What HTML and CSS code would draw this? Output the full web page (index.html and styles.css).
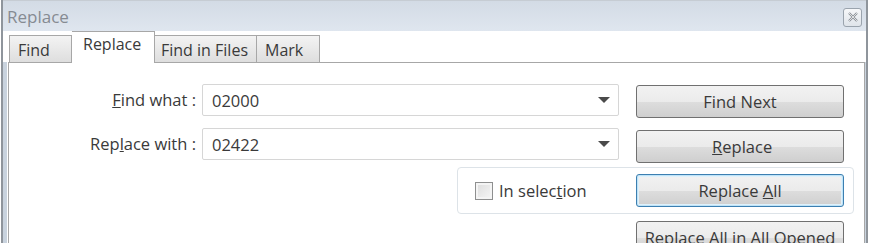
FILE: index.html
```html
<!DOCTYPE html>
<html>
<head>
<meta charset="utf-8">
<link rel="stylesheet" href="styles.css">
</head>
<body>
<div class="window">
  <div class="titlebar">
    <span class="title">Replace</span>
    <span class="close"><svg width="12" height="12" viewBox="0 0 12 12"><path d="M2 2 L10 10 M10 2 L2 10" stroke="#8a8f96" stroke-width="2.2" fill="none"/><path d="M2 2 L10 10 M10 2 L2 10" stroke="#f4f4f4" stroke-width="0.8" fill="none"/></svg></span>
  </div>
  <div class="tabs">
    <div class="tab t-find">Find</div>
    <div class="tab active t-replace">Replace</div>
    <div class="tab t-files">Find in Files</div>
    <div class="tab t-mark">Mark</div>
  </div>
  <div class="panel">
    <div class="row">
      <label class="lbl"><u>F</u>ind what :</label>
      <div class="combo"><span>02000</span><span class="arrow"></span></div>
      <button class="btn">Find Next</button>
    </div>
    <div class="row">
      <label class="lbl">Rep<u>l</u>ace with :</label>
      <div class="combo"><span>02422</span><span class="arrow"></span></div>
      <button class="btn btn-low">&nbsp;<u>R</u>eplace</button>
    </div>
    <div class="group">
      <label class="check"><span class="box"></span>In selec<u>t</u>ion</label>
      <button class="btn focus">Replace <u>A</u>ll</button>
    </div>
    <div class="lastrow">
      <button class="btn">Replace All in All Opened</button>
    </div>
  </div>
</div>
</body>
</html>
```
FILE: styles.css
```css
html, body {
  margin: 0;
  padding: 0;
  background: #ffffff;
  overflow: hidden;
}
body {
  width: 875px;
  height: 243px;
  font-family: "Open Sans", "Noto Sans", sans-serif;
  font-size: 16.5px;
  color: #3a3a3a;
}
.window {
  width: 867px;
  height: 260px;
  border-left: 2px solid #8f959c;
  border-right: 2px solid #8f959c;
  margin-left: 1px;
  box-shadow: inset 4px 0 0 #c9d3de, inset -4px 0 0 #c9d3de;
  box-sizing: border-box;
  display: flex;
  flex-direction: column;
}
.titlebar {
  height: 31px;
  background: linear-gradient(#d3dbe5, #dfe6ef);
  display: flex;
  align-items: center;
  justify-content: space-between;
  padding: 0 4px 0 4px;
  box-sizing: border-box;
  border-top: 1px solid #c6ccd3;
}
.title {
  font-size: 17px;
  color: #868b92;
  padding-top: 1px;
}
.close {
  width: 19px;
  height: 19px;
  box-sizing: border-box;
  border: 1px solid #9aa3ad;
  border-radius: 3px;
  background: linear-gradient(#f6f7f9, #dfe4ea);
  display: flex;
  align-items: center;
  justify-content: center;
  margin-top: 2px;
}
.tabs {
  display: flex;
  align-items: flex-end;
  height: 31px;
  padding-left: 6px;
  background: #ffffff;
  position: relative;
  z-index: 1;
}
.tab {
  height: 27px;
  box-sizing: border-box;
  border: 1px solid #a7a7a7;
  border-bottom: none;
  border-left: none;
  background: linear-gradient(#f3f3f3, #dedede);
  padding: 3px 0 0 8px;
  line-height: 22px;
  font-size: 16px;
}
.t-find { width: 63px; border-left: 1px solid #a7a7a7; }
.t-replace { width: 83px; }
.t-files { width: 102px; padding-left: 6px; }
.t-mark { width: 63px; }
.tab.active {
  height: 32px;
  margin-bottom: -1px;
  background: #ffffff;
  padding: 1px 0 0 11px;
  line-height: 22px;
}
.panel {
  margin-left: 5px;
  margin-right: 1px;
  border: 1px solid #a7a7a7;
  border-bottom: none;
  flex: 1;
  display: flex;
  flex-direction: column;
  padding-top: 21px;
  background: #ffffff;
}
.row {
  display: flex;
  align-items: flex-start;
  height: 32px;
  margin-bottom: 12px;
}
.lbl {
  width: 193px;
  text-align: right;
  padding-right: 6px;
  box-sizing: border-box;
  line-height: 32px;
}
.combo {
  width: 417px;
  height: 32px;
  box-sizing: border-box;
  border: 1px solid #d6d6d6;
  border-radius: 2px;
  display: flex;
  align-items: center;
  justify-content: space-between;
  padding: 0 8px 0 9px;
}
.arrow {
  width: 0;
  height: 0;
  border-left: 6px solid transparent;
  border-right: 6px solid transparent;
  border-top: 6px solid #4a4a4a;
}
.btn {
  font: inherit;
  color: inherit;
  width: 208px;
  height: 33px;
  margin-left: 17px;
  margin-top: 1px;
  border: 1px solid #707070;
  border-radius: 3px;
  background: linear-gradient(#f2f2f2 0%, #ebebeb 50%, #dddddd 51%, #cfcfcf 100%);
  padding: 0;
  box-sizing: border-box;
}
.btn-low {
  margin-top: 2px;
}
.btn.focus {
  border-color: #3c7fb1;
  box-shadow: inset 0 0 0 1px #bfe3f7, inset 0 0 0 2px #dff1fb;
}
.group {
  margin-left: 448px;
  width: 397px;
  height: 47px;
  box-sizing: border-box;
  border: 1px solid #dde3e8;
  border-radius: 4px;
  display: flex;
  align-items: center;
  margin-top: -5px;
}
.check {
  display: flex;
  align-items: center;
  margin-left: 17px;
  width: 161px;
}
.box {
  width: 18px;
  height: 18px;
  box-sizing: border-box;
  border: 1px solid #8e8f8f;
  background: linear-gradient(135deg, #dcdcdc, #f6f6f6);
  box-shadow: inset 0 0 0 2px #f4f4f4;
  margin-right: 6px;
}
.group .btn {
  margin-left: 0;
  margin-top: 0;
}
.lastrow {
  display: flex;
  margin-top: 7px;
  padding-left: 627px;
}
.lastrow .btn {
  margin-left: 0;
  margin-top: 0;
}
```
